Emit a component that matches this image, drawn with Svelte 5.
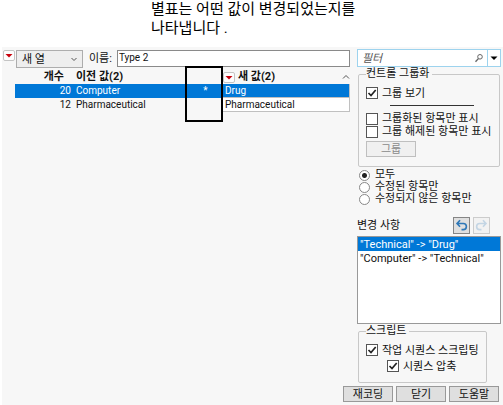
<script lang="ts">
	let columnMode = $state('새 열');
	let name = $state('Type 2');
	let filter = $state('');
	let show = $state('all');
	let selectedRow = $state(0);
	let selectedChange = $state(0);

	let rows = $state([
		{ count: 20, oldValue: 'Computer', changed: true, newValue: 'Drug' },
		{ count: 12, oldValue: 'Pharmaceutical', changed: false, newValue: 'Pharmaceutical' }
	]);

	const filters = [
		{ value: 'all', label: '모두' },
		{ value: 'modified', label: '수정된 항목만' },
		{ value: 'unmodified', label: '수정되지 않은 항목만' }
	];

	const changes = ['"Technical" -> "Drug"', '"Computer" -> "Technical"'];
</script>

{#snippet redTriangle(label: string)}
	<button class="red-menu" aria-label={label}>
		<svg viewBox="0 0 10 9"><path d="M1.5 3h7L5 6.5z" fill="#c8000c" /></svg>
	</button>
{/snippet}

<p class="caption">별표는 어떤 값이 변경되었는지를<br />나타냅니다 .</p>

<main>
	<section class="values">
		<div class="toolbar">
			{@render redTriangle('메뉴')}
			<select aria-label="열" bind:value={columnMode}>
				<option>새 열</option>
			</select>
			<label for="name">이름:</label>
			<input id="name" class="name" type="text" bind:value={name} />
		</div>

		<div class="table-wrap">
			<table>
				<thead>
					<tr>
						<th class="count">개수</th>
						<th class="old">이전 값(2)</th>
						<th class="mark"></th>
						<th class="new">
							<div class="new-head">
								{@render redTriangle('새 값 메뉴')}
								<span>새 값(2)</span>
								<svg class="up" viewBox="0 0 8 8"><path d="M1 5.5 4 2.5 7 5.5" fill="none" stroke="#555" /></svg>
							</div>
						</th>
					</tr>
				</thead>
				<tbody>
					{#each rows as row, i}
						<tr class:selected={selectedRow === i} onclick={() => (selectedRow = i)}>
							<td class="count">{row.count}</td>
							<td class="old">{row.oldValue}</td>
							<td class="mark">{row.changed ? '*' : ''}</td>
							<td class="new"><input type="text" aria-label="새 값" bind:value={row.newValue} /></td>
						</tr>
					{/each}
				</tbody>
			</table>
			<div class="highlight"></div>
		</div>
	</section>

	<aside>
		<div class="filter">
			<input type="text" aria-label="필터" placeholder="필터" bind:value={filter} />
			<svg class="search" viewBox="0 0 10 10" fill="none" stroke="#666">
				<circle cx="6" cy="3.8" r="2.3" />
				<path d="M4.4 5.6 1.5 8.8" stroke-width="1.4" />
			</svg>
			<button aria-label="필터 옵션">
				<svg viewBox="0 0 8 8"><path d="M.5 2.5h7L4 6z" /></svg>
			</button>
		</div>

		<fieldset class="grouping">
			<legend>컨트롤 그룹화</legend>
			<label class="check"><input type="checkbox" checked />그룹 보기</label>
			<hr />
			<label class="check"><input type="checkbox" />그룹화된 항목만 표시</label>
			<label class="check"><input type="checkbox" />그룹 해제된 항목만 표시</label>
			<button class="btn" disabled>그룹</button>
		</fieldset>

		<div class="radios">
			{#each filters as f}
				<label class="check"><input type="radio" name="show" value={f.value} bind:group={show} />{f.label}</label>
			{/each}
		</div>

		<div class="changes-head">
			<span>변경 사항</span>
			<button class="icon" aria-label="실행 취소">
				<svg viewBox="0 0 16 16" fill="none" stroke="#2f78b7" stroke-width="2">
					<path d="M6.2 1.5 2.5 5.5l3.7 4M2.8 5.5h7.4a3.8 3.8 0 0 1 0 7.6H8" />
				</svg>
			</button>
			<button class="icon" aria-label="다시 실행" disabled>
				<svg viewBox="0 0 16 16" fill="none" stroke="#c3d5e4" stroke-width="2">
					<path d="M9.8 1.5l3.7 4-3.7 4M13.2 5.5H5.8a3.8 3.8 0 0 0 0 7.6H8" />
				</svg>
			</button>
		</div>
		<ul class="changes">
			{#each changes as change, i}
				<li><button class:selected={selectedChange === i} onclick={() => (selectedChange = i)}>{change}</button></li>
			{/each}
		</ul>

		<fieldset class="script">
			<legend>스크립트</legend>
			<label class="check"><input type="checkbox" checked />작업 시퀀스 스크립팅</label>
			<label class="check nested"><input type="checkbox" checked />시퀀스 압축</label>
		</fieldset>
	</aside>

	<footer>
		<button class="btn">재코딩</button>
		<button class="btn">닫기</button>
		<button class="btn">도움말</button>
	</footer>
</main>

<style>
	:global(body) {
		background: #fff;
		color: #111;
		font: 11px/14px Roboto, 'Noto Sans CJK KR', sans-serif;
	}

	:global(#app) * {
		box-sizing: border-box;
	}

	button,
	input,
	select {
		font: inherit;
		color: inherit;
		margin: 0;
		padding: 0;
		border-radius: 0;
	}

	svg {
		display: block;
	}

	.caption {
		margin: 0 0 9px 151px;
		font-size: 15px;
		line-height: 19px;
		color: #000;
	}

	main {
		display: grid;
		grid-template-columns: 1fr 144px;
		column-gap: 7px;
		margin-left: 2px;
		padding: 2px 2px 2px 1px;
		background: #f7f7f7;
	}

	.toolbar {
		display: flex;
		align-items: flex-start;
		height: 21px;
		padding-top: 1px;
	}

	.toolbar label {
		margin: 2px 5px 0 6px;
	}

	.red-menu {
		flex: none;
		width: 12px;
		height: 11px;
		border: 1px solid #c4c4c4;
		border-radius: 2px;
		background: #fdfdfd;
	}

	.red-menu svg {
		width: 10px;
		height: 9px;
	}

	select {
		appearance: none;
		width: 67px;
		height: 18px;
		margin-left: 1px;
		padding: 2px 0 0 5px;
		border: 1px solid #adadad;
		background: #eee
			url("data:image/svg+xml,%3Csvg xmlns='http://www.w3.org/2000/svg' viewBox='0 0 8 8'%3E%3Cpath d='M1.5 3 4 5.5 6.5 3' fill='none' stroke='%23555'/%3E%3C/svg%3E")
			no-repeat right 4px center / 8px 8px;
	}

	.name {
		flex: 1;
		min-width: 0;
		height: 17px;
		padding: 0 1px 2px;
		border: 1px solid #8a8a8a;
		background: #fff;
		font-size: 10px;
	}

	.table-wrap {
		position: relative;
		margin-left: 12px;
	}

	table {
		width: 100%;
		table-layout: fixed;
		border-collapse: collapse;
	}

	th,
	td {
		height: 14px;
		padding: 0;
		line-height: 14px;
		text-align: left;
		white-space: nowrap;
	}

	td {
		font-size: 10px;
	}

	.count {
		width: 56px;
		text-align: right;
	}

	th.count {
		padding-right: 7px;
	}

	.old {
		padding-left: 5px;
	}

	.mark {
		width: 37px;
		padding-left: 4px;
		text-align: center;
	}

	.new {
		width: 128px;
	}

	.new-head {
		display: flex;
		align-items: center;
		gap: 3px;
		padding-left: 1px;
	}

	.up {
		width: 8px;
		height: 8px;
		margin-left: auto;
	}

	.new input {
		display: block;
		width: 100%;
		height: 14px;
		padding: 0 2px;
		border: 1px solid #c0c0c0;
		border-top: 0;
		background: #fff;
	}

	.selected,
	.selected input {
		background: #0078d7;
		color: #fff;
	}

	.highlight {
		position: absolute;
		top: -4px;
		right: 127px;
		width: 38px;
		height: 56px;
		border: 2px solid #000;
		pointer-events: none;
	}

	.filter {
		display: flex;
		align-items: center;
		height: 18px;
		border: 1px solid #9dd3ee;
		background: #fff;
	}

	.filter input {
		flex: 1;
		min-width: 0;
		padding: 1px 0 0 4px;
		border: 0;
		background: none;
		outline: none;
		font-style: italic;
	}

	.filter input::placeholder {
		color: #555;
	}

	.search {
		width: 10px;
		height: 10px;
		margin-right: 3px;
	}

	.filter button {
		width: 13px;
		height: 16px;
		padding: 0 2px;
		border: 0;
		border-left: 1px solid #9dd3ee;
		background: none;
	}

	.filter button svg {
		width: 8px;
		height: 8px;
	}

	fieldset {
		min-width: 0;
		margin: 0 1px;
		padding: 0 0 0 7px;
		border: 1px solid #c8c8c8;
		border-radius: 2px;
	}

	legend {
		padding: 0 3px 0 0;
		line-height: 14px;
	}

	.grouping {
		padding-bottom: 9px;
	}

	.grouping .check:first-of-type {
		height: 14px;
		margin-top: 5px;
	}

	hr {
		width: 84px;
		height: 1px;
		margin: 5px 0 6px 24px;
		border: 0;
		background: #333;
	}

	.check {
		display: flex;
		align-items: center;
		gap: 4px;
		height: 13px;
		line-height: 13px;
		white-space: nowrap;
	}

	.check input {
		appearance: none;
		flex: none;
		width: 12px;
		height: 12px;
		border: 1px solid #555;
		background: #fff;
	}

	.check input[type='checkbox']:checked {
		background: #fff
			url("data:image/svg+xml,%3Csvg xmlns='http://www.w3.org/2000/svg' viewBox='0 0 10 10'%3E%3Cpath d='M1.5 5 4 7.5 8.7 2' fill='none' stroke='%23222' stroke-width='1.7'/%3E%3C/svg%3E")
			center / 10px 10px;
	}

	.check input[type='radio'] {
		width: 11px;
		height: 11px;
		border-color: #888;
		border-radius: 50%;
	}

	.check input[type='radio']:checked {
		background: radial-gradient(circle, #222 2px, #fff 3px);
	}

	.btn {
		width: 50px;
		height: 16px;
		padding-top: 1px;
		border: 1px solid #999;
		background: #dfdfdf;
		line-height: 13px;
	}

	.btn:disabled {
		display: block;
		margin-top: 3px;
		border-color: #bfbfbf;
		background: #f0f0f0;
		color: #8a8a8a;
	}

	.radios {
		margin: 2px 0 0 2px;
	}

	.radios .check {
		height: 12px;
		line-height: 12px;
		gap: 5px;
	}

	.changes-head {
		display: flex;
		align-items: center;
		gap: 3px;
		margin: 12px 11px 2px 0;
	}

	.changes-head span {
		flex: 1;
	}

	.icon {
		width: 17px;
		height: 17px;
		padding: 1px;
		border: 1px solid #858585;
		background: #dfdfdf;
	}

	.icon:disabled {
		border-color: #ccc;
		background: #f2f2f2;
	}

	.icon svg {
		width: 13px;
		height: 13px;
	}

	.changes {
		min-height: 88px;
		margin: 0;
		padding: 0;
		border: 1px solid #999;
		background: #fff;
		list-style: none;
	}

	.changes button {
		display: block;
		width: 100%;
		height: 14px;
		padding: 1px 2px 0;
		border: 0;
		background: none;
		line-height: 13px;
		text-align: left;
	}

	.changes button.selected {
		background: #0078d7;
	}

	.script {
		margin-right: 14px;
		padding-bottom: 8px;
	}

	.script .check {
		height: 16px;
	}

	.script .check:first-of-type {
		margin-top: 4px;
	}

	.nested {
		margin-left: 21px;
	}

	footer {
		grid-column: 1 / -1;
		display: flex;
		justify-content: flex-end;
		gap: 3px;
		margin: 3px 2px 1px 0;
	}
</style>
